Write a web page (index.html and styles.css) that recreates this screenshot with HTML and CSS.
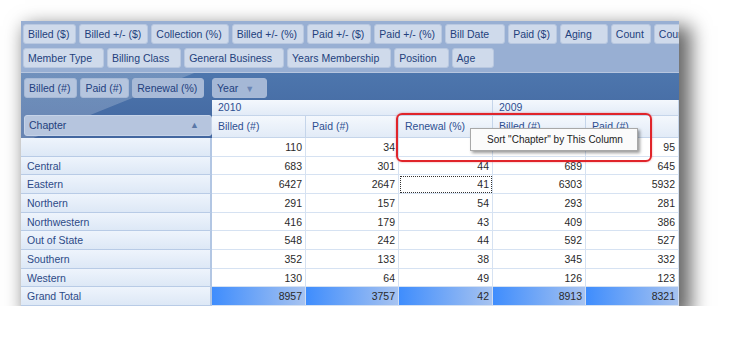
FILE: index.html
```html
<!DOCTYPE html>
<html lang="en">

<head>
  <meta charset="UTF-8">
  <meta name="viewport" content="width=device-width, initial-scale=1.0">
  <title>Chapter Pivot</title>
  <link rel="stylesheet" href="styles.css">
</head>

<body>

  <div class="frame">
    <div class="filters">
      <div class="field-row">
        <span class="field">Billed ($)</span>
        <span class="field">Billed +/- ($)</span>
        <span class="field">Collection (%)</span>
        <span class="field">Billed +/- (%)</span>
        <span class="field">Paid +/- ($)</span>
        <span class="field">Paid +/- (%)</span>
        <span class="field field-date">Bill Date</span>
        <span class="field">Paid ($)</span>
        <span class="field field-wide">Aging</span>
        <span class="field">Count</span>
        <span class="field">Count (Members)</span>
      </div>
      <div class="field-row members">
        <span class="field">Member Type</span>
        <span class="field">Billing Class</span>
        <span class="field">General Business</span>
        <span class="field">Years Membership</span>
        <span class="field">Position</span>
        <span class="field field-wide">Age</span>
      </div>
    </div>

    <div class="pivot">
      <div class="data-fields">
        <span class="field band-field">Billed (#)</span>
        <span class="field band-field">Paid (#)</span>
        <span class="field band-field active">Renewal (%)</span>
      </div>
      <div class="column-fields">
        <span class="field band-field year-field">Year <span class="arrow-down">&#9660;</span></span>
      </div>

      <div class="row-field-cell">
        <span class="field chapter-field">Chapter <span class="arrow-up">&#9650;</span></span>
      </div>
      <div class="col-head year-2010">2010</div>
      <div class="col-head year-2009">2009</div>

      <div class="col-head">Billed (#)</div>
      <div class="col-head">Paid (#)</div>
      <div class="col-head">Renewal (%)</div>
      <div class="col-head">Billed (#)</div>
      <div class="col-head">Paid (#)</div>

      <div class="row-head"></div>
      <div class="cell">110</div><div class="cell">34</div><div class="cell">31</div><div class="cell">105</div><div class="cell">95</div>

      <div class="row-head">Central</div>
      <div class="cell">683</div><div class="cell">301</div><div class="cell">44</div><div class="cell">689</div><div class="cell">645</div>

      <div class="row-head">Eastern</div>
      <div class="cell">6427</div><div class="cell">2647</div><div class="cell focus">41</div><div class="cell">6303</div><div class="cell">5932</div>

      <div class="row-head">Northern</div>
      <div class="cell">291</div><div class="cell">157</div><div class="cell">54</div><div class="cell">293</div><div class="cell">281</div>

      <div class="row-head">Northwestern</div>
      <div class="cell">416</div><div class="cell">179</div><div class="cell">43</div><div class="cell">409</div><div class="cell">386</div>

      <div class="row-head">Out of State</div>
      <div class="cell">548</div><div class="cell">242</div><div class="cell">44</div><div class="cell">592</div><div class="cell">527</div>

      <div class="row-head">Southern</div>
      <div class="cell">352</div><div class="cell">133</div><div class="cell">38</div><div class="cell">345</div><div class="cell">332</div>

      <div class="row-head">Western</div>
      <div class="cell">130</div><div class="cell">64</div><div class="cell">49</div><div class="cell">126</div><div class="cell">123</div>

      <div class="row-head">Grand Total</div>
      <div class="cell total">8957</div><div class="cell total">3757</div><div class="cell total">42</div><div class="cell total">8913</div><div class="cell total">8321</div>
    </div>

    <!-- highlight + context menu over the header -->
    <div class="callout"></div>
    <div class="menu">Sort "Chapter" by This Column</div>
  </div>

</body>

</html>
```

FILE: styles.css
```css
body,
html {
  margin: 0;
  background-color: #fff;
  font-family: "Liberation Sans", Arial, sans-serif;
  font-size: 10.5px;
}

.frame {
  position: relative;
  margin: 21px 0 0 21px;
  width: 658px;
  height: 285px;
  overflow: hidden;
  box-shadow: 8px 9px 18px 4px rgba(0, 0, 0, 0.6);
}

.filters {
  box-sizing: border-box;
  height: 52px;
  padding: 3px 0 0 2px;
  background-color: #98afd3;
  border-bottom: 1px solid #b7c6df;
  display: flex;
  flex-direction: column;
  gap: 4px;
}

.field-row {
  display: flex;
  gap: 3px;
}

.field {
  flex: none;
  box-sizing: border-box;
  height: 20px;
  line-height: 18px;
  padding: 0 6px 0 4px;
  white-space: nowrap;
  color: #233f7c;
  background-color: #cfdaeb;
  border: 1px solid #b9c8e0;
  border-radius: 3px;
}

.members .field {
  padding-right: 11px;
}

.field-date {
  padding-right: 15px;
}

.field-wide {
  padding-right: 15px;
}

.members .field-wide {
  padding-right: 18px;
}

.pivot {
  display: grid;
  grid-template-columns: 191px 94px 93px 94px 93px 93px;
  grid-template-rows: 27px 16px 22px repeat(9, 18.67px);
  background:
    linear-gradient(158deg, rgba(255, 255, 255, 0.2) 0 21%, rgba(255, 255, 255, 0) 21.3%) no-repeat 0 0 / 100% 65px,
    linear-gradient(#4d76ad, #42669f) no-repeat 0 0 / 100% 65px,
    #fff;
}

.data-fields {
  display: flex;
  gap: 3px;
  padding: 5px 0 0 3px;
}

.column-fields {
  grid-column: span 5;
  padding-top: 5px;
}

.band-field {
  display: inline-block;
  color: #22407e;
  background-color: #b5c5de;
  border-color: #a7b9d6;
}

.band-field.active {
  background-color: #a8bad7;
}

.year-field {
  width: 55px;
  background-color: #a5b8d6;
}

.arrow-down {
  margin-left: 4px;
  font-size: 9px;
  color: #6a86b5;
}

.row-field-cell {
  grid-row: span 2;
  display: flex;
  align-items: flex-end;
  padding: 0 0 2px 3px;
}

.chapter-field {
  flex: 1;
  height: 21px;
  line-height: 19px;
  display: flex;
  justify-content: space-between;
  padding: 0 12px 0 4px;
  background-color: #b6c5de;
  border-color: #c6d3e8;
}

.arrow-up {
  font-size: 9px;
  color: #5a77a6;
}

.col-head {
  box-sizing: border-box;
  padding-left: 6px;
  white-space: nowrap;
  overflow: hidden;
  color: #2d4f91;
  background: linear-gradient(#f4f8fd, #e2ebf7);
  border-right: 1px solid #c5d5ea;
  border-bottom: 1px solid #c5d5ea;
  line-height: 15px;
}

.year-2010 {
  grid-column: span 3;
}

.year-2009 {
  grid-column: span 2;
}

.col-head:nth-child(n+6) {
  line-height: 21px;
}

.row-head {
  box-sizing: border-box;
  padding-left: 6px;
  line-height: 18px;
  color: #2c4a87;
  background: linear-gradient(#eef4fc, #dde8f6);
  border-right: 2px solid #b2c6e3;
  border-bottom: 1px solid #b8cbe6;
}

.cell {
  box-sizing: border-box;
  padding-right: 3px;
  text-align: right;
  line-height: 18px;
  color: #2a2a2a;
  background-color: #fff;
  border-right: 1px solid #d6e2f2;
  border-bottom: 1px solid #d6e2f2;
}

.cell.focus {
  outline: 1px dotted #333;
  outline-offset: -2px;
}

.cell.total {
  background: linear-gradient(to right, #3f8dfd, #a7c3f0);
  border-right-color: #cfdcf2;
}

.callout {
  position: absolute;
  left: 375px;
  top: 92px;
  width: 256px;
  height: 49px;
  box-sizing: border-box;
  border: 2px solid #e0242a;
  border-radius: 6px;
  box-shadow: 0 0 2px rgba(224, 36, 42, 0.5);
}

.menu {
  position: absolute;
  left: 449px;
  top: 107px;
  width: 168px;
  height: 23px;
  box-sizing: border-box;
  padding-left: 16px;
  line-height: 21px;
  font-size: 10px;
  color: #222;
  white-space: nowrap;
  background-color: #fbfbfb;
  border: 1px solid #a8a8a8;
  box-shadow: 2px 2px 3px rgba(0, 0, 0, 0.4);
}
```
